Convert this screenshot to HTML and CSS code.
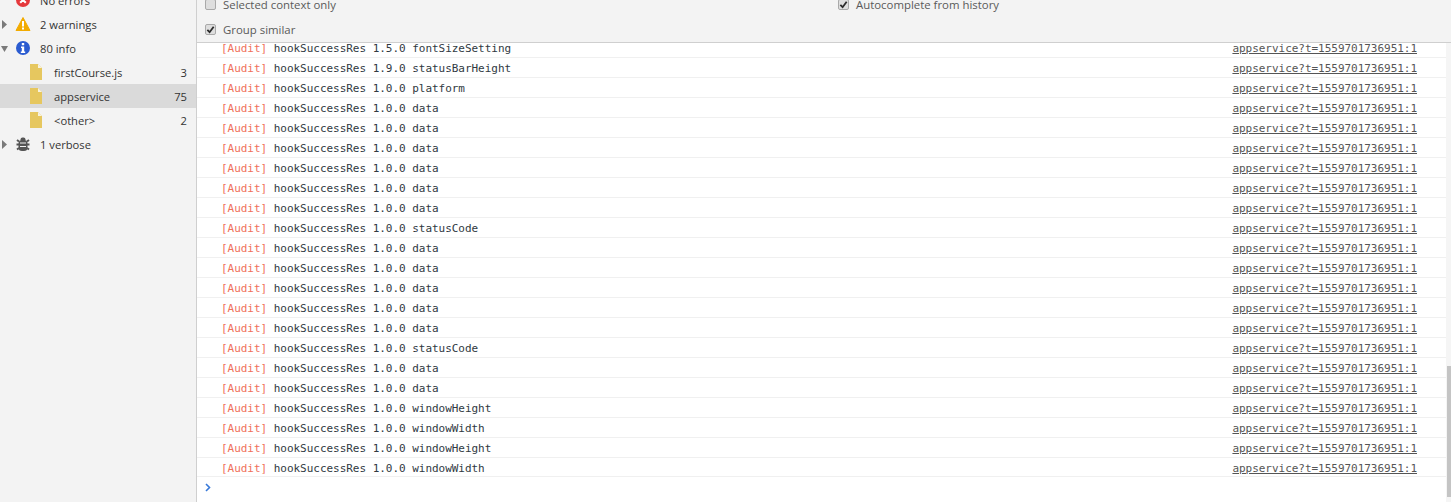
FILE: index.html
```html
<!DOCTYPE html>
<html lang="en">
<head>
<meta charset="utf-8">
<title>Console</title>
<link rel="stylesheet" href="styles.css">
</head>
<body>
<div class="app">
  <aside class="sidebar">
    <ul class="tree">
      <li class="item">
        <span class="arrow"></span>
        <svg class="icon" viewBox="0 0 16 16"><circle cx="8" cy="8" r="7" fill="#e5383b"/><path d="M5.2 5.2l5.6 5.6M10.8 5.2l-5.6 5.6" stroke="#fff" stroke-width="2"/></svg>
        <span class="label">No errors</span>
      </li>
      <li class="item">
        <svg class="arrow" viewBox="0 0 7 9"><path d="M1 0l5 4.500-5 4.500z" fill="#7a7a7a"/></svg>
        <svg class="icon" viewBox="0 0 16 16"><path d="M8 1.500L15 14.500H1z" fill="#f2ab00" stroke="#f2ab00" stroke-linejoin="round"/><path d="M7 5h2v5.500H7zM7 11.500h2v2H7z" fill="#fff"/></svg>
        <span class="label">2 warnings</span>
      </li>
      <li class="item">
        <svg class="arrow" viewBox="0 0 7 9"><path d="M0 2h7L3.500 8z" fill="#7a7a7a"/></svg>
        <svg class="icon" viewBox="0 0 16 16"><circle cx="8" cy="8" r="7" fill="#2a5bd0"/><path d="M6.800 3h2.400v2.200H6.800zM6 6.500h3.200v5H10.200V13H5.800v-1.500h1V8H6z" fill="#fff"/></svg>
        <span class="label">80 info</span>
      </li>
      <li class="item sub">
        <svg class="file" viewBox="0 0 12 16"><path d="M0 0h8l4 4v12H0z" fill="#e6c75f"/><path d="M8 0l4 4H8z" fill="#f8f3de"/></svg>
        <span class="label grow">firstCourse.js</span><span class="count">3</span>
      </li>
      <li class="item sub selected">
        <svg class="file" viewBox="0 0 12 16"><path d="M0 0h8l4 4v12H0z" fill="#e6c75f"/><path d="M8 0l4 4H8z" fill="#f8f3de"/></svg>
        <span class="label grow">appservice</span><span class="count">75</span>
      </li>
      <li class="item sub">
        <svg class="file" viewBox="0 0 12 16"><path d="M0 0h8l4 4v12H0z" fill="#e6c75f"/><path d="M8 0l4 4H8z" fill="#f8f3de"/></svg>
        <span class="label grow">&lt;other&gt;</span><span class="count">2</span>
      </li>
      <li class="item">
        <svg class="arrow" viewBox="0 0 7 9"><path d="M1 0l5 4.500-5 4.500z" fill="#7a7a7a"/></svg>
        <svg class="icon" viewBox="0 0 16 16"><rect x="3.500" y="4" width="9" height="11" rx="3.500" fill="#555"/><rect x="5.500" y="1.500" width="5" height="4" rx="2" fill="#555"/><path d="M2 4l2 1.500M14 4l-2 1.500M1.500 8.500h3M14.500 8.500h-3M2 13.500l2-1.500M14 13.500l-2-1.500" stroke="#555" stroke-width="2"/><path d="M5 7h6M5 10.500h6" stroke="#f3f3f3" stroke-width="1.200"/></svg>
        <span class="label">1 verbose</span>
      </li>
    </ul>
  </aside>
  <main class="main">
    <header class="toolbar">
      <div class="opts">
        <label class="opt"><span class="check"></span>Selected context only</label>
        <label class="opt"><span class="check"><svg class="tick" viewBox="0 0 10 10"><path d="M1.500 5.500l2.500 2.500 4.500-6" fill="none" stroke="#2a2a2a" stroke-width="2"/></svg></span>Group similar</label>
      </div>
      <div class="opts">
        <label class="opt"><span class="check"><svg class="tick" viewBox="0 0 10 10"><path d="M1.500 5.500l2.500 2.500 4.500-6" fill="none" stroke="#2a2a2a" stroke-width="2"/></svg></span>Autocomplete from history</label>
      </div>
    </header>
    <section class="log">
      <div class="row first"><span class="msg"><span class="tag">[Audit]</span> hookSuccessRes 1.5.0 fontSizeSetting</span><a class="src">appservice?t=1559701736951:1</a></div>
      <div class="row"><span class="msg"><span class="tag">[Audit]</span> hookSuccessRes 1.9.0 statusBarHeight</span><a class="src">appservice?t=1559701736951:1</a></div>
      <div class="row"><span class="msg"><span class="tag">[Audit]</span> hookSuccessRes 1.0.0 platform</span><a class="src">appservice?t=1559701736951:1</a></div>
      <div class="row"><span class="msg"><span class="tag">[Audit]</span> hookSuccessRes 1.0.0 data</span><a class="src">appservice?t=1559701736951:1</a></div>
      <div class="row"><span class="msg"><span class="tag">[Audit]</span> hookSuccessRes 1.0.0 data</span><a class="src">appservice?t=1559701736951:1</a></div>
      <div class="row"><span class="msg"><span class="tag">[Audit]</span> hookSuccessRes 1.0.0 data</span><a class="src">appservice?t=1559701736951:1</a></div>
      <div class="row"><span class="msg"><span class="tag">[Audit]</span> hookSuccessRes 1.0.0 data</span><a class="src">appservice?t=1559701736951:1</a></div>
      <div class="row"><span class="msg"><span class="tag">[Audit]</span> hookSuccessRes 1.0.0 data</span><a class="src">appservice?t=1559701736951:1</a></div>
      <div class="row"><span class="msg"><span class="tag">[Audit]</span> hookSuccessRes 1.0.0 data</span><a class="src">appservice?t=1559701736951:1</a></div>
      <div class="row"><span class="msg"><span class="tag">[Audit]</span> hookSuccessRes 1.0.0 statusCode</span><a class="src">appservice?t=1559701736951:1</a></div>
      <div class="row"><span class="msg"><span class="tag">[Audit]</span> hookSuccessRes 1.0.0 data</span><a class="src">appservice?t=1559701736951:1</a></div>
      <div class="row"><span class="msg"><span class="tag">[Audit]</span> hookSuccessRes 1.0.0 data</span><a class="src">appservice?t=1559701736951:1</a></div>
      <div class="row"><span class="msg"><span class="tag">[Audit]</span> hookSuccessRes 1.0.0 data</span><a class="src">appservice?t=1559701736951:1</a></div>
      <div class="row"><span class="msg"><span class="tag">[Audit]</span> hookSuccessRes 1.0.0 data</span><a class="src">appservice?t=1559701736951:1</a></div>
      <div class="row"><span class="msg"><span class="tag">[Audit]</span> hookSuccessRes 1.0.0 data</span><a class="src">appservice?t=1559701736951:1</a></div>
      <div class="row"><span class="msg"><span class="tag">[Audit]</span> hookSuccessRes 1.0.0 statusCode</span><a class="src">appservice?t=1559701736951:1</a></div>
      <div class="row"><span class="msg"><span class="tag">[Audit]</span> hookSuccessRes 1.0.0 data</span><a class="src">appservice?t=1559701736951:1</a></div>
      <div class="row"><span class="msg"><span class="tag">[Audit]</span> hookSuccessRes 1.0.0 data</span><a class="src">appservice?t=1559701736951:1</a></div>
      <div class="row"><span class="msg"><span class="tag">[Audit]</span> hookSuccessRes 1.0.0 windowHeight</span><a class="src">appservice?t=1559701736951:1</a></div>
      <div class="row"><span class="msg"><span class="tag">[Audit]</span> hookSuccessRes 1.0.0 windowWidth</span><a class="src">appservice?t=1559701736951:1</a></div>
      <div class="row"><span class="msg"><span class="tag">[Audit]</span> hookSuccessRes 1.0.0 windowHeight</span><a class="src">appservice?t=1559701736951:1</a></div>
      <div class="row last"><span class="msg"><span class="tag">[Audit]</span> hookSuccessRes 1.0.0 windowWidth</span><a class="src">appservice?t=1559701736951:1</a></div>
      <div class="prompt"><svg class="caret" viewBox="0 0 6 9"><path d="M1 1l3.500 3.500L1 8" fill="none" stroke="#3879d9" stroke-width="1.600"/></svg></div>
    </section>
    <div class="track"><div class="thumb"></div></div>
  </main>
</div>
</body>
</html>
```

FILE: styles.css
```css
* { box-sizing: border-box; }
html, body { margin: 0; height: 100%; overflow: hidden; background: #fff; }
.app { display: flex; height: 502px; font-family: "Open Sans", "Noto Sans", sans-serif; font-size: 11.4px; color: #333; }

.sidebar { width: 197px; flex: none; background: #f3f3f3; border-right: 1px solid #cfcfcf; overflow: hidden; font-size: 11.2px; }
.tree { list-style: none; margin: -12px 0 0; padding: 0; }
.item { display: flex; align-items: center; height: 24px; padding-right: 9px; }
.item.selected { background: #dadada; }
.arrow { width: 7px; height: 9px; margin-left: 1px; flex: none; }
.icon { width: 16px; height: 16px; margin-left: 7px; flex: none; }
.label { margin-left: 9px; white-space: nowrap; }
.sub { padding-left: 30px; }
.file { width: 12px; height: 16px; flex: none; }
.sub .label { margin-left: 12px; }
.grow { flex: 1; }
.count { color: #333; }

.main { flex: 1; min-width: 0; position: relative; display: flex; flex-direction: column; overflow: hidden; }
.toolbar { height: 43px; flex: none; display: flex; background: #f3f3f3; border-bottom: 1px solid #cfcfcf; overflow: hidden; color: #5a5a5a; }
.opts { width: 633px; flex: none; padding-left: 8px; margin-top: -8px; }
.opt { display: flex; align-items: center; height: 24px; white-space: nowrap; }
.opt + .opt { margin-top: 1px; }
.check { width: 11px; height: 11px; margin-right: 7px; border: 1px solid #a9a9a9; border-radius: 2px; background: #dedede; display: inline-flex; align-items: center; justify-content: center; }
.tick { display: block; width: 9px; height: 9px; }

.log { flex: 1; background: #fff; font-family: "DejaVu Sans Mono", monospace; font-size: 11px; letter-spacing: -0.03px; overflow: hidden; }
.row { display: flex; justify-content: space-between; height: 20px; padding: 2px 34px 0 24px; align-items: center; border-bottom: 1px solid #f0f0f0; color: #303942; white-space: pre; }
.row.first { height: 15px; padding-top: 0; padding-bottom: 2px; align-items: flex-end; }
.row.last { height: 19px; padding-top: 3px; }
.tag { color: #f0705a; }
.src { color: #555; text-decoration: underline; }
.prompt { height: 25px; padding: 6px 0 0 8px; }
.caret { display: block; width: 6px; height: 9px; }
.track { position: absolute; right: 0; top: 43px; bottom: 0; width: 5px; background: #f5f5f5; }
.thumb { position: absolute; right: 0; top: 323px; width: 4px; height: 131px; background: #c4c4c4; }
```
